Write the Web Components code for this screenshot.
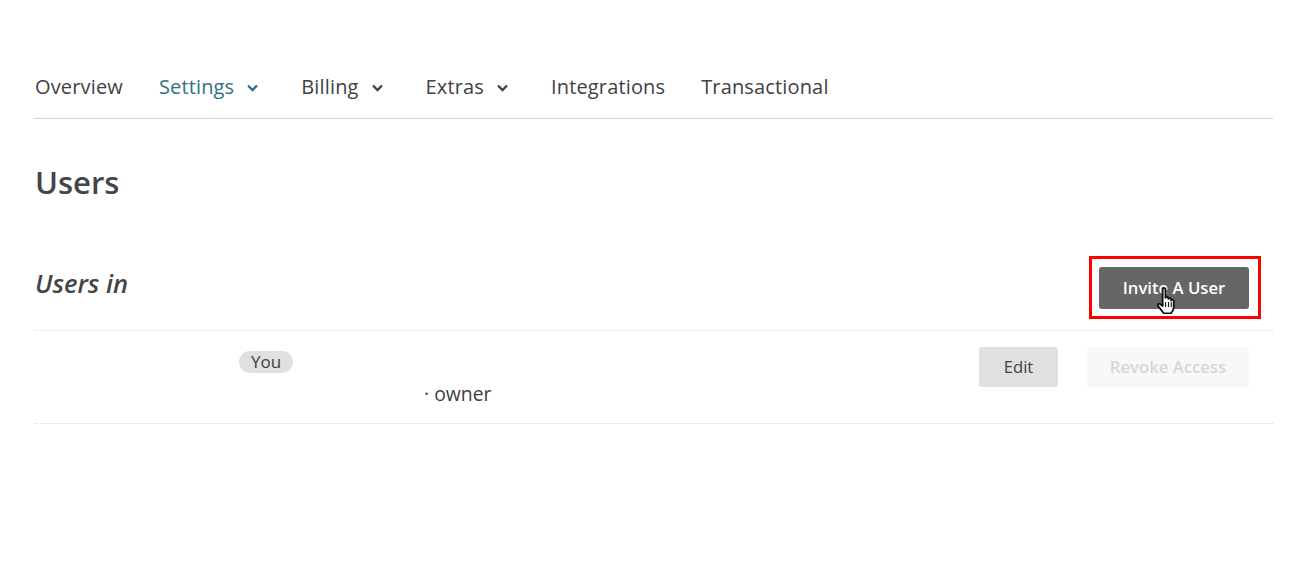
<!DOCTYPE html>
<html><head><meta charset="utf-8"><style>
html,body{margin:0;background:#fff}
body{font-family:"Open Sans",sans-serif;color:#403f3f;overflow:hidden;height:564px}
</style></head><body>
<template id="t-nav-item"><style>
:host{display:inline-flex;align-items:center;gap:13px;font-size:20px;line-height:28px;color:#3f4142;letter-spacing:.15px}
:host([active]){color:#2d7383}
:host([menu]){margin-right:7px}
svg{display:none;width:11px;height:8px;margin-top:1px}
:host([menu]) svg{display:block}
</style><slot></slot><svg viewBox="0 0 11 8"><path d="M1 1.5 5.5 6 10 1.5" fill="none" stroke="currentColor" stroke-width="2.3"/></svg></template>

<template id="t-nav"><style>
:host{display:flex;align-items:flex-start;padding:73px 0 17px 1px;border-bottom:1px solid #d4d5d5;gap:36px}
</style><slot></slot></template>

<template id="t-btn"><style>
:host{display:inline-flex;align-items:center;justify-content:center;box-sizing:border-box;height:40px;padding-bottom:2px;border-radius:3px;font-size:16.7px;font-weight:600;background:#e0e0e0;color:#403f3f}
:host([kind=primary]){background:#666;color:#fff;height:42px;width:150px;padding-bottom:1px}
:host([kind=edit]){width:79px;font-weight:500}
:host([kind=ghost]){width:162px;background:#f8f8f8;color:#d6d6d6}
</style><slot></slot></template>

<template id="t-badge"><style>
:host{display:inline-block;background:#e0e0e0;border-radius:11px;font-size:17px;line-height:22px;padding:0 12px;color:#403f3f}
</style><slot></slot></template>

<template id="t-section-head"><style>
:host{display:flex;justify-content:space-between;align-items:flex-start;height:95px;box-sizing:border-box;border-bottom:1px dotted #dadada}
h2{margin:0;padding:29px 0 0 1px;font-size:25.5px;line-height:36px;font-style:italic;font-weight:600;color:#444546}
.act{padding:31px 24px 0 0;position:relative}
.mark{position:absolute;left:-10px;top:20px;width:172px;height:63px;box-sizing:border-box;border:3px solid #f00}
svg{position:absolute;left:57px;top:51px;width:21px;height:27px}
</style><h2><slot name="title"></slot></h2><div class="act"><slot></slot><div class="mark"></div>
<svg viewBox="0 0 19 27" preserveAspectRatio="none"><path d="M6 2.2c0-1.6 2.6-1.6 2.6 0v8.6c.3-1.5 2.6-1.3 2.6.4v.8c.3-1.4 2.5-1.2 2.5.5v1c.4-1.3 2.4-1 2.4.6v5.6c0 3-1.6 5.6-2.4 6.6H7c-1.3-1.6-3-4.4-5-7.2-1.2-1.8.6-3.2 2-1.8L6 19Z" fill="#fff" stroke="#111" stroke-width="1.7" stroke-linejoin="round"/><path d="M8.7 15v5M11.3 15v5M13.8 15v5" stroke="#111" stroke-width="1"/></svg></div></template>

<template id="t-user-row"><style>
:host{display:flex;justify-content:space-between;height:93px;box-sizing:border-box;border-bottom:1px dotted #dadada}
.who{padding-left:205px;padding-top:20px}
.l1{height:22px;line-height:22px}
.l2{font-size:19.4px;line-height:26px;padding:8px 0 0 185px;color:#403f3f}
.act{display:flex;gap:29px;padding:16px 24px 0 0}
</style><div class="who"><div class="l1"><slot name="badge"></slot></div><div class="l2"><slot name="role"></slot></div></div><div class="act"><slot></slot></div></template>

<template id="t-page"><style>
:host{display:block;margin:0 36px 0 34px}
h1{margin:0;padding:43px 0 0 1px;font-size:31px;line-height:40px;font-weight:600;color:#444546;height:74px}
</style><slot name="nav"></slot><h1><slot name="title"></slot></h1><slot></slot></template>

<x-page>
<x-nav slot="nav">
<x-nav-item>Overview</x-nav-item>
<x-nav-item active menu>Settings</x-nav-item>
<x-nav-item menu>Billing</x-nav-item>
<x-nav-item menu>Extras</x-nav-item>
<x-nav-item>Integrations</x-nav-item>
<x-nav-item>Transactional</x-nav-item>
</x-nav>
<span slot="title">Users</span>
<x-section-head><span slot="title">Users in</span><x-btn kind="primary">Invite A User</x-btn></x-section-head>
<x-user-row><x-badge slot="badge">You</x-badge><span slot="role">· owner</span><x-btn kind="edit">Edit</x-btn><x-btn kind="ghost">Revoke Access</x-btn></x-user-row>
</x-page>
<script>
for(const n of ['nav-item','nav','btn','badge','section-head','user-row','page']){
  const t=document.getElementById('t-'+n);
  customElements.define('x-'+n,class extends HTMLElement{constructor(){super();this.attachShadow({mode:'open'}).append(t.content.cloneNode(true))}});
}
</script>
</body></html>
